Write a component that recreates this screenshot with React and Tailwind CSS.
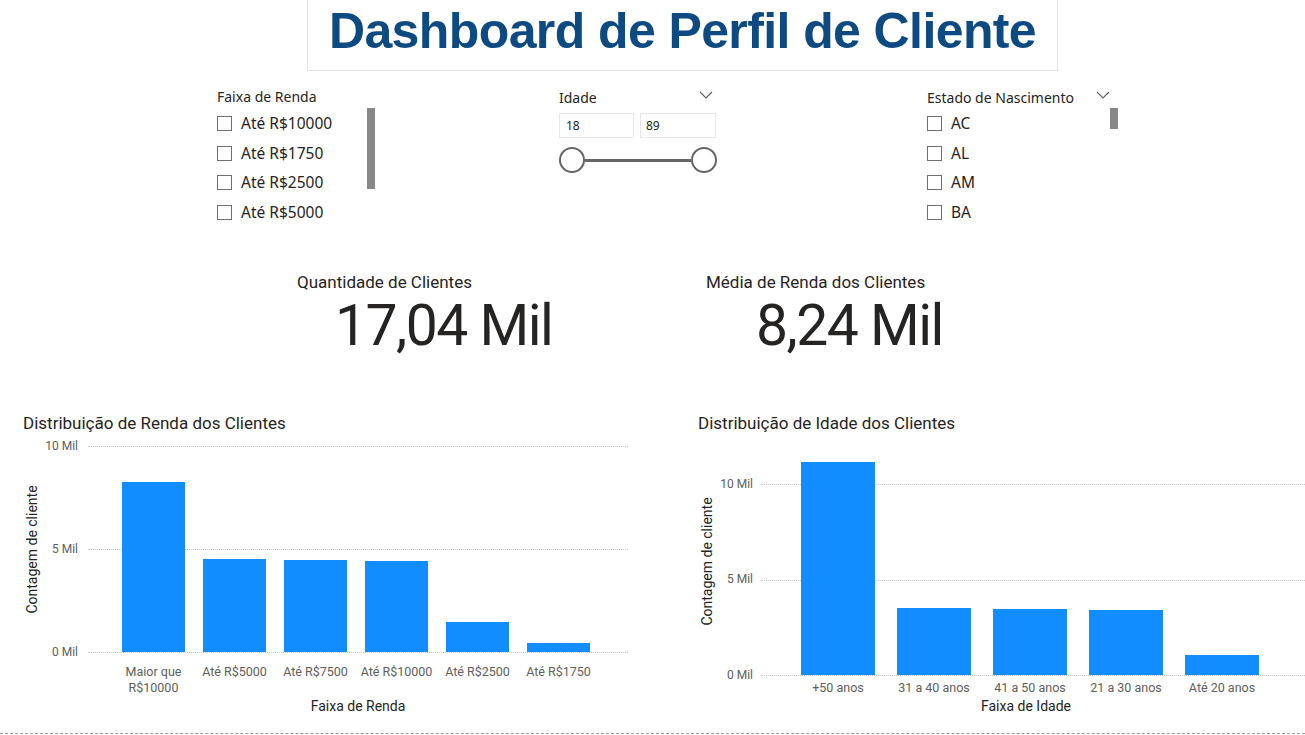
import React from "react";

const din = { fontFamily: "Roboto, 'Liberation Sans', sans-serif" };
const segoe = { fontFamily: "'Noto Sans', 'Open Sans', sans-serif" };

const rendaBars = [
  { label: ["Maior que", "R$10000"], value: 8.25 },
  { label: ["Até R$5000"], value: 4.5 },
  { label: ["Até R$7500"], value: 4.47 },
  { label: ["Até R$10000"], value: 4.43 },
  { label: ["Até R$2500"], value: 1.46 },
  { label: ["Até R$1750"], value: 0.44 },
];

const idadeBars = [
  { label: "+50 anos", value: 11.16 },
  { label: "31 a 40 anos", value: 3.53 },
  { label: "41 a 50 anos", value: 3.48 },
  { label: "21 a 30 anos", value: 3.43 },
  { label: "Até 20 anos", value: 1.05 },
];

const Chevron = () => (
  <svg width="14" height="8" viewBox="0 0 14 8" fill="none">
    <path d="M1 1l6 6 6-6" stroke="#605e5c" strokeWidth="1.1" />
  </svg>
);

const CheckItem = ({ label }) => (
  <div className="flex items-center h-[29.5px]">
    <div className="w-[15px] h-[15px] border border-[#6f6f6f] bg-white mr-[9px]" />
    <span className="text-[15.5px] text-[#252423]" style={segoe}>
      {label}
    </span>
  </div>
);

const Grid = ({ top }) => (
  <div
    className="absolute left-0 right-0 border-t border-dotted border-[#c8c6c4]"
    style={{ top }}
  />
);

export default function App() {
  return (
    <div className="w-[1305px] h-[735px] bg-white overflow-hidden relative">
      {/* title */}
      <div className="flex pl-[307px]">
        <div className="w-[751px] h-[71px] border border-t-0 border-[#e3e3e3] flex items-center justify-center pb-[8px]">
          <h1
            className="text-[50px] font-bold text-[#0e4a82] tracking-[-0.6px] leading-none"
            style={{ fontFamily: "'Liberation Sans', Arial, sans-serif" }}
          >
            Dashboard de Perfil de Cliente
          </h1>
        </div>
      </div>

      {/* slicers */}
      <div className="flex pl-[217px] pt-[18px] h-[180px]">
        <div className="w-[342px] flex">
          <div className="w-[150px]">
            <div className="text-[14px] text-[#252423] h-[16px] leading-[16px]" style={segoe}>
              Faixa de Renda
            </div>
            <div className="mt-[4px]">
              {["Até R$10000", "Até R$1750", "Até R$2500", "Até R$5000"].map((l) => (
                <CheckItem key={l} label={l} />
              ))}
            </div>
          </div>
          <div className="w-[8px] h-[81px] bg-[#888888] mt-[19px]" />
        </div>

        <div className="w-[368px]">
          <div className="w-[157px] flex items-center justify-between h-[16px]">
            <span className="text-[14px] text-[#252423]" style={segoe}>
              Idade
            </span>
            <span className="mr-[3px] mb-[4px]">
              <Chevron />
            </span>
          </div>
          <div className="flex gap-[6px] mt-[8px]">
            <div className="w-[75px] h-[25px] border border-[#e8e8e8] text-[12px] text-[#252423] pl-[6px] leading-[23px]" style={segoe}>
              18
            </div>
            <div className="w-[76px] h-[25px] border border-[#e8e8e8] text-[12px] text-[#252423] pl-[5px] leading-[23px]" style={segoe}>
              89
            </div>
          </div>
          <div className="flex items-center mt-[9px] w-[158px]">
            <div className="w-[26px] h-[26px] rounded-full border-2 border-[#666666] bg-white" />
            <div className="flex-1 h-[3px] bg-[#666666]" />
            <div className="w-[26px] h-[26px] rounded-full border-2 border-[#666666] bg-white" />
          </div>
        </div>

        <div className="flex">
          <div className="w-[183px]">
            <div className="flex items-center justify-between h-[16px]">
              <span className="text-[14px] text-[#252423]" style={segoe}>
                Estado de Nascimento
              </span>
              <span className="mb-[4px]">
                <Chevron />
              </span>
            </div>
            <div className="mt-[4px]">
              {["AC", "AL", "AM", "BA"].map((l) => (
                <CheckItem key={l} label={l} />
              ))}
            </div>
          </div>
          <div className="w-[8px] h-[21px] bg-[#888888] mt-[19px]" />
        </div>
      </div>

      {/* KPIs */}
      <div className="flex pt-[21px] h-[160px]" style={din}>
        <div className="ml-[297px] w-[409px]">
          <div className="text-[17px] text-[#252423] leading-[20px]">Quantidade de Clientes</div>
          <div className="text-[57px] leading-[60px] text-[#252423] tracking-[-1.5px] ml-[38px] mt-[4px]">
            17,04 Mil
          </div>
        </div>
        <div>
          <div className="text-[17px] text-[#252423] leading-[20px]">Média de Renda dos Clientes</div>
          <div className="text-[57px] leading-[60px] text-[#252423] tracking-[-1.5px] ml-[50px] mt-[4px]">
            8,24 Mil
          </div>
        </div>
      </div>

      {/* charts */}
      <div className="flex" style={din}>
        {/* renda chart */}
        <div className="w-[675px] pl-[23px] pt-[2px]">
          <div className="text-[17px] text-[#252423] leading-[20px]">
            Distribuição de Renda dos Clientes
          </div>
          <div className="flex items-start mt-[13px]">
            <div className="w-[18px] h-[206px] flex items-center justify-center">
              <div className="-rotate-90 whitespace-nowrap text-[14px] text-[#252423]">
                Contagem de cliente
              </div>
            </div>
            <div className="w-[37px] relative h-[206px] text-[12px] text-[#605e5c] text-right">
              <div className="absolute right-0 top-[-8px] leading-[16px]">10 Mil</div>
              <div className="absolute right-0 top-[95px] leading-[16px]">5 Mil</div>
              <div className="absolute right-0 top-[198px] leading-[16px]">0 Mil</div>
            </div>
            <div className="ml-[10px] w-[540px]">
              <div className="relative h-[206px]">
                <Grid top={0} />
                <Grid top={103} />
                <Grid top={206} />
                <div className="absolute inset-0 flex items-end gap-[18px] pl-[34px]">
                  {rendaBars.map((b, i) => (
                    <div
                      key={i}
                      className="w-[63px] bg-[#118dff]"
                      style={{ height: `${(b.value / 10) * 206}px` }}
                    />
                  ))}
                </div>
              </div>
              <div className="flex gap-[18px] pl-[34px] mt-[12px]">
                {rendaBars.map((b, i) => (
                  <div key={i} className="w-[81px] -mx-[9px] text-center text-[12.5px] text-[#605e5c] leading-[16px]">
                    {b.label.map((l) => (
                      <div key={l}>{l}</div>
                    ))}
                  </div>
                ))}
              </div>
              <div className="text-center text-[14px] text-[#252423] mt-[0px]">
                Faixa de Renda
              </div>
            </div>
          </div>
        </div>

        {/* idade chart */}
        <div className="flex-1 pt-[2px]">
          <div className="text-[17px] text-[#252423] leading-[20px] ml-[23px]">
            Distribuição de Idade dos Clientes
          </div>
          <div className="flex items-start mt-[14px] ml-[23px]">
            <div className="w-[18px] h-[228px] flex items-center justify-center">
              <div className="-rotate-90 whitespace-nowrap text-[14px] text-[#252423]">
                Contagem de cliente
              </div>
            </div>
            <div className="w-[37px] relative h-[228px] text-[12px] text-[#605e5c] text-right">
              <div className="absolute right-0 top-[29px] leading-[16px]">10 Mil</div>
              <div className="absolute right-0 top-[124px] leading-[16px]">5 Mil</div>
              <div className="absolute right-0 top-[220px] leading-[16px]">0 Mil</div>
            </div>
            <div className="ml-[8px] flex-1">
              <div className="relative h-[228px]">
                <Grid top={37} />
                <Grid top={132.5} />
                <Grid top={228} />
                <div className="absolute inset-0 flex items-end gap-[22px] pl-[40px]">
                  {idadeBars.map((b, i) => (
                    <div
                      key={i}
                      className="w-[74px] bg-[#118dff]"
                      style={{ height: `${(b.value / 5) * 95.5}px` }}
                    />
                  ))}
                </div>
              </div>
              <div className="flex gap-[22px] pl-[40px] mt-[5px]">
                {idadeBars.map((b, i) => (
                  <div key={i} className="w-[74px] text-center text-[12.5px] text-[#605e5c] leading-[16px] whitespace-nowrap">
                    {b.label}
                  </div>
                ))}
              </div>
              <div className="text-[14px] text-[#252423] mt-[0px] ml-[220px]">Faixa de Idade</div>
            </div>
          </div>
        </div>
      </div>

      <div className="absolute left-0 right-0 bottom-[1px] border-t border-dashed border-[#9a9a9a]" />
    </div>
  );
}
